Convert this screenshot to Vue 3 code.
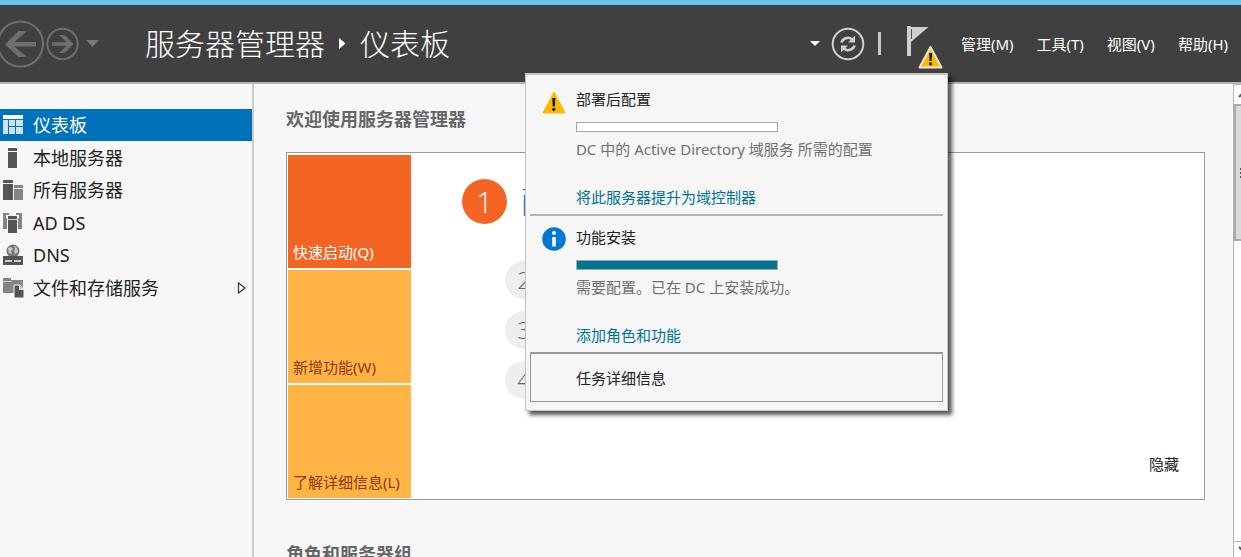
<script setup>
const servers = [
  { label: '仪表板', icon: 'dash', active: true },
  { label: '本地服务器', icon: 'local' },
  { label: '所有服务器', icon: 'all' },
  { label: 'AD DS', icon: 'ad' },
  { label: 'DNS', icon: 'dns' },
  { label: '文件和存储服务', icon: 'files', expandable: true }
]
const menus = ['管理(M)', '工具(T)', '视图(V)', '帮助(H)']
const tiles = [
  { label: '快速启动(Q)', active: true },
  { label: '新增功能(W)' },
  { label: '了解详细信息(L)' }
]
const notices = [
  {
    kind: 'warn',
    title: '部署后配置',
    progress: 0,
    text: 'DC 中的 Active Directory 域服务 所需的配置',
    link: '将此服务器提升为域控制器'
  },
  {
    kind: 'info',
    title: '功能安装',
    progress: 100,
    text: '需要配置。已在 DC 上安装成功。',
    link: '添加角色和功能'
  }
]
</script>

<template>
  <div class="window">
    <header class="header">
      <button class="plain" aria-label="后退">
        <svg width="44" height="48" viewBox="0 0 44 48">
          <circle cx="20.5" cy="24" r="22.5" fill="none" stroke="#6e6e6e" stroke-width="2.2" />
          <path d="M36 22v4.5H14.5L27 37h-8.5L5 24.2 18.5 11H27L14.5 22z" fill="#6e6e6e" />
        </svg>
      </button>
      <button class="plain forward" aria-label="前进">
        <svg width="34" height="34" viewBox="0 0 34 34">
          <circle cx="16.5" cy="17" r="15.2" fill="none" stroke="#6e6e6e" stroke-width="2" />
          <path d="M6 15.3v3.4h14.5L13 26h5.5l9-9-9-9H13l7.500 7.300z" fill="#6e6e6e" />
        </svg>
      </button>
      <button class="plain history" aria-label="历史记录">
        <svg width="14" height="8" viewBox="0 0 14 8"><path d="M0 0h13L6.500 7z" fill="#777" /></svg>
      </button>
      <h1 class="title">
        <span>服务器管理器</span>
        <svg width="7" height="11" viewBox="0 0 7 11"><path d="M0 0l6.500 5.500L0 11z" fill="#fff" /></svg>
        <span>仪表板</span>
      </h1>
      <div class="tools">
        <button class="plain" aria-label="展开">
          <svg width="10" height="5" viewBox="0 0 10 5"><path d="M0 0h10L5 5z" fill="#fff" /></svg>
        </button>
        <button class="plain refresh" aria-label="刷新">
          <svg width="34" height="34" viewBox="0 0 34 34">
            <circle cx="17" cy="17" r="15.3" fill="none" stroke="#cfcfcf" stroke-width="2" />
            <path d="M10.500 15.500c1-4 7-6.500 10.500-3M23.500 18.500c-1 4-7 6.500-10.500 3" fill="none" stroke="#cfcfcf" stroke-width="2.6" />
            <path d="M24 8.500v7h-7zM10 25.500v-7h7z" fill="#cfcfcf" />
          </svg>
        </button>
        <span class="divider"></span>
        <div class="flag">
          <button class="plain" aria-label="通知">
            <svg width="38" height="57" viewBox="0 -8 38 57">
              <path d="M1 5h4v30H1z" fill="#cfcfcf" />
              <path d="M5 6h17.500L9 17.500 5 21z" fill="#cfcfcf" />
              <path d="M5.500 8v10" stroke="#555" stroke-width="1" />
              <path d="M24.500 26l11 20.500h-22z" fill="#fdb900" stroke="#ece5d3" stroke-width="2" stroke-linejoin="round" />
              <path d="M23 32h3.200l-.6 8h-2z" fill="#222" /><rect x="23.200" y="41.500" width="2.800" height="2.800" fill="#222" />
            </svg>
          </button>
          <section class="popup">
            <article v-for="n in notices" :key="n.title" class="notice">
              <svg v-if="n.kind === 'warn'" width="24" height="26" viewBox="0 0 24 26">
                <path d="M12 3.500l10.700 20.200H1.300z" fill="#fdb900" stroke="#fdb900" stroke-width="1.4" stroke-linejoin="round" />
                <path d="M10.300 9h3l-.5 8.500h-2z" fill="#111" /><circle cx="11.8" cy="20.3" r="1.6" fill="#111" />
              </svg>
              <svg v-else width="24" height="24" viewBox="0 0 24 24">
                <circle cx="12" cy="12" r="11.8" fill="#0078d4" />
                <circle cx="12" cy="6" r="2" fill="#fff" /><path d="M10.200 10h3.600v9.500h-3.600z" fill="#fff" />
              </svg>
              <div>
                <h3>{{ n.title }}</h3>
                <progress :value="n.progress" max="100" :aria-label="n.title"></progress>
                <p>{{ n.text }}</p>
                <a href="#">{{ n.link }}</a>
              </div>
            </article>
            <button class="details">任务详细信息</button>
          </section>
        </div>
        <nav class="menus">
          <button v-for="m in menus" :key="m" class="plain">{{ m }}</button>
        </nav>
      </div>
    </header>

    <div class="body">
      <nav class="sidebar">
        <a v-for="s in servers" :key="s.label" href="#" class="item" :class="{ active: s.active }">
          <svg width="22" height="22" viewBox="0 0 22 22">
            <g v-if="s.icon === 'dash'">
              <path d="M1 1h20v4H1z" fill="#fff" />
              <path d="M1 6h5v14H1zM7 6h6v6H7zM14 6h7v6h-7zM7 13h6v7H7zM14 13h7v7h-7z" fill="#cbe3f3" />
            </g>
            <g v-else-if="s.icon === 'local'" fill="#555">
              <path d="M6 1h9v3H6zM6 5h9v16H6z" />
            </g>
            <g v-else-if="s.icon === 'all'">
              <path d="M1 1h10v3H1zM1 5h10v16H1z" fill="#555" />
              <path d="M12 6h9v3h-9zM12 10h9v11h-9z" fill="#858585" />
            </g>
            <g v-else-if="s.icon === 'ad'">
              <path d="M1 1h6v2H4v3h1v11H1zM14 1h6v16h-4V6h1V3h-3z" fill="#858585" />
              <path d="M6 4h9v3H6zM6 8h9v13H6z" fill="#555" />
              <path d="M6 7.500h9" stroke="#ccc" />
            </g>
            <g v-else-if="s.icon === 'dns'">
              <circle cx="11" cy="7" r="6.5" fill="#777" />
              <path d="M6 4l3-1 2 2-2 2 1 3-3-1zM12 2l3 2 1 4-3 2-1-3 1-2z" fill="#c9c9c9" />
              <path d="M1 12h20v9H1z" fill="#555" />
              <path d="M3 17h7M12 17h7" stroke="#ccc" stroke-width="2" />
            </g>
            <g v-else>
              <path d="M1 1h8v2h12v8h-9v5H1z" fill="#858585" />
              <path d="M1 4.500h9" stroke="#ccc" />
              <path d="M12 8h6l4 5v8h-10z" fill="#555" stroke="#f8f8f8" /><path d="M17 8v5h5z" fill="#ddd" />
            </g>
          </svg>
          <span>{{ s.label }}</span>
          <svg v-if="s.expandable" class="expand" width="10" height="12" viewBox="0 0 10 12">
            <path d="M1.500 1l6.500 5-6.500 5z" fill="#fff" stroke="#333" stroke-width="1.2" />
          </svg>
        </a>
      </nav>

      <main class="content">
        <h2>欢迎使用服务器管理器</h2>
        <section class="welcome">
          <div class="tiles">
            <button v-for="t in tiles" :key="t.label" class="tile" :class="{ active: t.active }">{{ t.label }}</button>
          </div>
          <div class="steps">
            <div class="first-step">
              <span class="number">1</span>
              <a href="#">配置此本地服务器</a>
            </div>
            <ol class="more">
              <li v-for="n in [2, 3, 4]" :key="n">{{ n }}</li>
            </ol>
          </div>
          <button class="plain hide">隐藏</button>
        </section>
        <h2>角色和服务器组</h2>
      </main>

      <div class="scrollbar">
        <div class="arrow"><svg width="10" height="7" viewBox="0 0 10 7"><path d="M1 6l4-4 4 4" fill="none" stroke="#555" stroke-width="2" /></svg></div>
        <div class="thumb"><i></i><i></i><i></i></div>
        <div class="arrow bottom"><svg width="10" height="7" viewBox="0 0 10 7"><path d="M1 1l4 4 4-4" fill="none" stroke="#555" stroke-width="2" /></svg></div>
      </div>
    </div>
  </div>
</template>

<style>
body {
  background: #f7f7f7;
}
</style>

<style scoped>
* {
  box-sizing: border-box;
  margin: 0;
  padding: 0;
}
.window {
  display: flex;
  flex-direction: column;
  height: 100vh;
  overflow: hidden;
  border-top: 5px solid #63c8e9;
  background: #f7f7f7;
  color: #222;
  font-family: "Noto Sans", "Noto Sans CJK SC", sans-serif;
  font-size: 15px;
  line-height: 20px;
}
button {
  font: inherit;
  color: inherit;
}
a {
  text-decoration: none;
}
svg {
  display: block;
  flex: none;
}
.plain {
  border: 0;
  background: none;
}
.header {
  display: flex;
  flex: none;
  align-items: center;
  height: 79px;
  border-bottom: 2px solid #b5b5b5;
  background: #404040;
  color: #fff;
}
.forward {
  margin-left: 2px;
}
.history {
  margin-left: 6px;
}
.title {
  display: flex;
  align-items: center;
  gap: 14px;
  margin-left: 45px;
  font-size: 30px;
  font-weight: 300;
  line-height: 40px;
  white-space: nowrap;
}
.tools {
  display: flex;
  align-items: center;
  margin-left: auto;
  padding-right: 13px;
}
.refresh {
  margin-left: 11px;
}
.divider {
  width: 3px;
  height: 23px;
  margin-left: 13px;
  background: #c8c8c8;
}
.flag {
  position: relative;
  margin-left: 25px;
}
.menus {
  display: flex;
  gap: 23px;
  margin-left: 17px;
  white-space: nowrap;
}
.popup {
  position: absolute;
  z-index: 2;
  top: 60px;
  right: -4px;
  width: 423px;
  padding: 3px 4px 8px;
  border: 1px solid #c4c4c4;
  border-top-width: 2px;
  background: #f6f6f6;
  box-shadow: 4px 4px 4px rgba(0, 0, 0, 0.65);
  color: #222;
}
.notice {
  display: flex;
  gap: 10px;
  padding: 11px 12px 7px;
}
.notice:first-child {
  border-bottom: 2px solid #b4b4b4;
}
.notice h3 {
  font-size: 15px;
  font-weight: 400;
}
.notice progress {
  display: block;
  width: 202px;
  height: 10px;
  margin-top: 13px;
  border: 1px solid #a6a6a6;
  background: #fff;
  appearance: none;
}
.notice progress::-webkit-progress-bar {
  background: #fff;
}
.notice progress::-webkit-progress-value {
  background: #007396;
}
.notice p {
  margin-top: 7px;
  color: #707070;
}
.notice a {
  display: block;
  margin-top: 28px;
  color: #007396;
}
.details {
  display: block;
  width: 100%;
  height: 50px;
  padding-left: 45px;
  border: 1px solid #999;
  border-top-width: 2px;
  background: #f6f6f6;
  text-align: left;
}
.body {
  display: flex;
  flex: 1;
  min-height: 0;
}
.sidebar {
  display: grid;
  flex: none;
  grid-auto-rows: 32px 33px;
  align-content: start;
  width: 254px;
  padding-top: 25px;
  border-right: 2px solid #cbcbcb;
}
.item {
  display: flex;
  align-items: center;
  gap: 9px;
  padding: 0 5px 0 2px;
  color: #222;
  font-size: 18px;
  line-height: 24px;
}
.item.active {
  background: #0072bc;
  color: #fff;
}
.expand {
  margin-left: auto;
}
.content {
  flex: 1;
  min-width: 0;
  padding: 23px 28px 0 32px;
}
h2 {
  color: #666;
  font-size: 18px;
  font-weight: 700;
  line-height: 24px;
}
.welcome {
  display: flex;
  margin: 21px 0 42px;
  padding: 2px 1px 1px;
  border: 1px solid #999;
  background: #fff;
}
.tiles {
  display: grid;
  grid-auto-rows: 113px;
  gap: 2px;
  width: 123px;
}
.tile {
  display: flex;
  align-items: flex-end;
  padding: 0 5px 6px;
  border: 0;
  background: #ffb445;
  color: #8c3b12;
  white-space: nowrap;
}
.tile.active {
  background: #f46524;
  color: #fff;
}
.steps {
  padding: 24px 0 0 51px;
}
.first-step {
  display: flex;
  align-items: center;
  gap: 14px;
  font-size: 30px;
  font-weight: 300;
  line-height: 40px;
}
.first-step a {
  color: #0072c6;
}
.number {
  width: 45px;
  height: 45px;
  border-radius: 50%;
  background: #f46524;
  color: #fff;
  font-family: "Open Sans", sans-serif;
  line-height: 45px;
  text-align: center;
}
.more {
  display: grid;
  gap: 12px;
  margin: 37px 0 0 43px;
  font-family: "Open Sans", sans-serif;
  list-style: none;
}
.more li {
  width: 38px;
  height: 38px;
  border-radius: 50%;
  background: #eee;
  color: #666;
  font-size: 24px;
  font-weight: 300;
  line-height: 38px;
  text-align: center;
}
.hide {
  align-self: flex-end;
  margin: 0 24px 24px auto;
}
.scrollbar {
  display: flex;
  flex: none;
  flex-direction: column;
  width: 8px;
  overflow: hidden;
  border-left: 1px solid #b4b4b4;
  background: #fff;
}
.arrow {
  display: flex;
  flex: none;
  align-items: center;
  height: 20px;
  padding-left: 4px;
  border-top: 1px solid #b4b4b4;
}
.arrow.bottom {
  height: 16px;
  margin-top: auto;
}
.thumb {
  display: flex;
  flex-direction: column;
  justify-content: center;
  gap: 2px;
  width: 18px;
  height: 137px;
  padding-left: 4px;
  border: 2px solid #aaa;
  border-right: 0;
  background: #dadada;
}
.thumb i {
  width: 9px;
  height: 2px;
  background: #555;
}
</style>
